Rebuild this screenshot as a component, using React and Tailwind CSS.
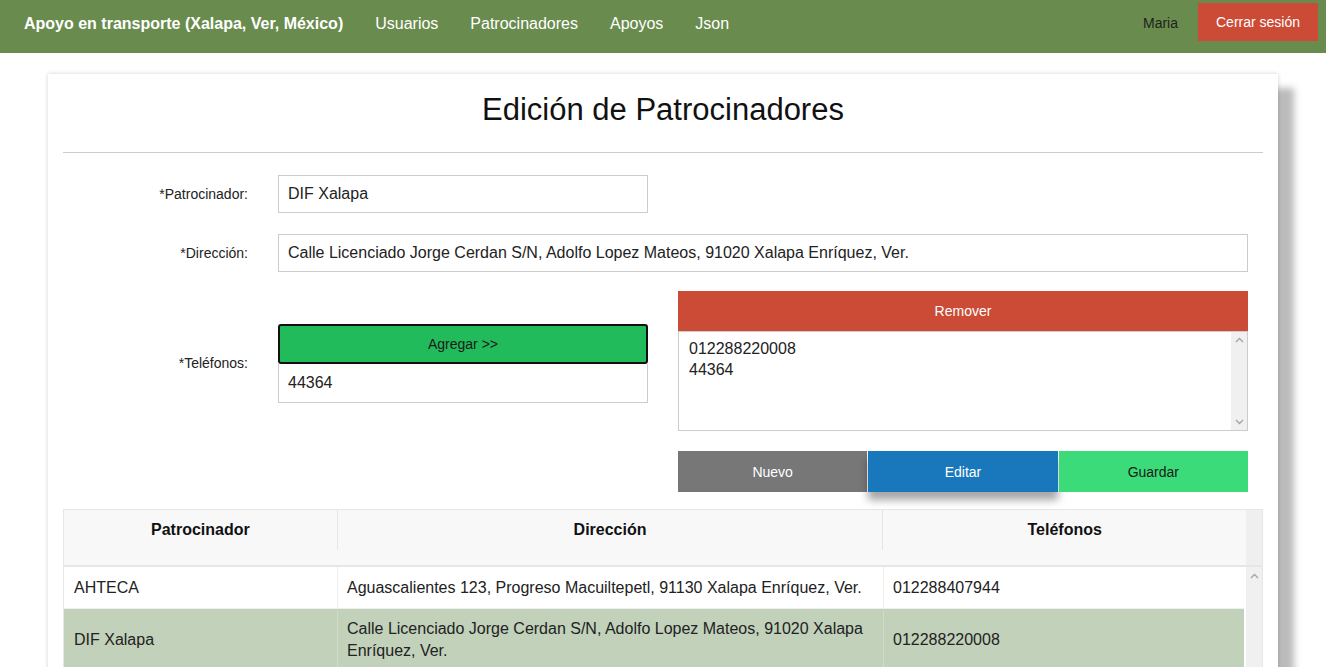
import React from "react";

const Chevron = ({ up = true, className = "" }) => (
  <svg width="9" height="6" viewBox="0 0 9 6" className={className}>
    <polyline
      points={up ? "1,5 4.5,1.5 8,5" : "1,1 4.5,4.5 8,1"}
      fill="none"
      stroke="#a3a3a3"
      strokeWidth="1.3"
    />
  </svg>
);

const rows = [
  {
    name: "AHTECA",
    address: "Aguascalientes 123, Progreso Macuiltepetl, 91130 Xalapa Enríquez, Ver.",
    phone: "012288407944",
    selected: false,
  },
  {
    name: "DIF Xalapa",
    address: "Calle Licenciado Jorge Cerdan S/N, Adolfo Lopez Mateos, 91020 Xalapa Enríquez, Ver.",
    phone: "012288220008",
    selected: true,
  },
];

const App = () => {
  return (
    <div className="min-h-screen bg-white font-['Liberation_Sans',Arial,sans-serif] text-[#222]">
      {/* navbar */}
      <nav className="flex h-[53px] items-start bg-[#698c4e]">
        <div className="flex items-center gap-8 pl-6 pt-[14px] text-base leading-[20px] text-white">
          <span className="font-bold">Apoyo en transporte (Xalapa, Ver, México)</span>
          <a>Usuarios</a>
          <a>Patrocinadores</a>
          <a>Apoyos</a>
          <a>Json</a>
        </div>
        <div className="ml-auto flex items-start">
          <span className="pt-[15px] text-sm leading-[16px] text-[#1f1f1f]">Maria</span>
          <button className="ml-5 mr-2 mt-[3px] h-[38px] w-[120px] bg-[#cb4b37] text-sm text-white">
            Cerrar sesión
          </button>
        </div>
      </nav>

      {/* card */}
      <div className="mx-12 mt-[21px] bg-white px-[15px] pb-10 shadow-[0_0_4px_rgba(0,0,0,0.18),16px_14px_7px_#bbbbbb]">
        <h1 className="pt-[18px] text-center text-[31px] leading-[36px] text-[#111]">
          Edición de Patrocinadores
        </h1>
        <div className="mt-[24px] border-t border-[#cccccc]" />

        {/* patrocinador */}
        <div className="mt-[22px] flex items-center">
          <label className="w-[200px] pr-[15px] text-right text-sm">*Patrocinador:</label>
          <div className="ml-[15px] flex h-[38px] w-[370px] items-center border border-[#cccccc] px-[9px] text-base">
            DIF Xalapa
          </div>
        </div>

        {/* direccion */}
        <div className="mt-[21px] flex items-center">
          <label className="w-[200px] pr-[15px] text-right text-sm">*Dirección:</label>
          <div className="ml-[15px] flex h-[38px] w-[970px] items-center border border-[#cccccc] px-[9px] text-base">
            Calle Licenciado Jorge Cerdan S/N, Adolfo Lopez Mateos, 91020 Xalapa Enríquez, Ver.
          </div>
        </div>

        {/* telefonos */}
        <div className="mt-[19px] flex items-start">
          <label className="mt-[64px] w-[200px] pr-[15px] text-right text-sm leading-[16px]">*Teléfonos:</label>
          <div className="mt-[33px] flex w-[400px] flex-col px-[15px]">
            <button className="h-[40px] rounded-[3px] border-2 border-[#111] bg-[#22bb5b] text-sm text-[#1a1a1a]">
              Agregar &gt;&gt;
            </button>
            <div className="flex h-[39px] items-center border border-t-0 border-[#cccccc] px-[9px] text-base">
              44364
            </div>
          </div>
          <div className="flex w-[600px] flex-col px-[15px]">
            <button className="h-[40px] bg-[#cb4b37] text-sm text-white">Remover</button>
            <div className="flex h-[100px] border border-[#cccccc]">
              <div className="flex-1 px-[10px] pt-[6px] text-base leading-[21px]">
                <div>012288220008</div>
                <div>44364</div>
              </div>
              <div className="flex w-[16px] flex-col items-center justify-between bg-[#f0f0f0] py-[5px]">
                <Chevron up />
                <Chevron up={false} />
              </div>
            </div>
          </div>
        </div>

        {/* action buttons */}
        <div className="ml-[615px] mt-[20px] grid w-[570px] grid-cols-3 gap-px">
          <button className="h-[41px] bg-[#777777] text-sm text-white">Nuevo</button>
          <button className="h-[41px] bg-[#1977bc] text-sm text-white shadow-[0_8px_8px_rgba(0,0,0,0.35)]">
            Editar
          </button>
          <button className="h-[41px] bg-[#3bdb7a] text-sm text-[#1a1a1a]">Guardar</button>
        </div>

        {/* table */}
        <div className="mt-[17px] border border-[#e6e6e6]">
          <div className="flex h-[57px] items-start border-b-2 border-[#e6e6e6] bg-[#f8f8f8]">
            <div className="flex h-[40px] w-[273px] items-center justify-center text-base font-bold text-[#111]">
              Patrocinador
            </div>
            <div className="flex h-[40px] w-[546px] items-center justify-center border-l border-[#e6e6e6] text-base font-bold text-[#111]">
              Dirección
            </div>
            <div className="flex h-[40px] w-[364px] items-center justify-center border-l border-[#e6e6e6] text-base font-bold text-[#111]">
              Teléfonos
            </div>
            <div className="ml-auto h-full w-[16px] bg-[#efefef]" />
          </div>
          <div className="flex">
            <div className="flex-1 pr-[2px]">
              {rows.map((r) => (
                <div
                  key={r.name}
                  className={`flex border-b border-[#eeeeee] text-base leading-[22px] ${
                    r.selected ? "bg-[#c1d1ba] py-[2px]" : "bg-white"
                  }`}
                >
                  <div className="flex min-h-[41px] w-[273px] items-center px-[10px] py-[7px]">{r.name}</div>
                  <div
                    className={`flex w-[546px] items-center border-l px-[9px] py-[7px] ${
                      r.selected ? "border-[#cfdec6]" : "border-[#eeeeee]"
                    }`}
                  >
                    {r.address}
                  </div>
                  <div
                    className={`flex flex-1 items-center border-l px-[9px] py-[7px] ${
                      r.selected ? "border-[#cfdec6]" : "border-[#eeeeee]"
                    }`}
                  >
                    {r.phone}
                  </div>
                </div>
              ))}
            </div>
            <div className="flex w-[16px] flex-col items-center bg-[#f0f0f0] pt-[6px]">
              <Chevron up />
            </div>
          </div>
        </div>
      </div>
    </div>
  );
};

export default App;
